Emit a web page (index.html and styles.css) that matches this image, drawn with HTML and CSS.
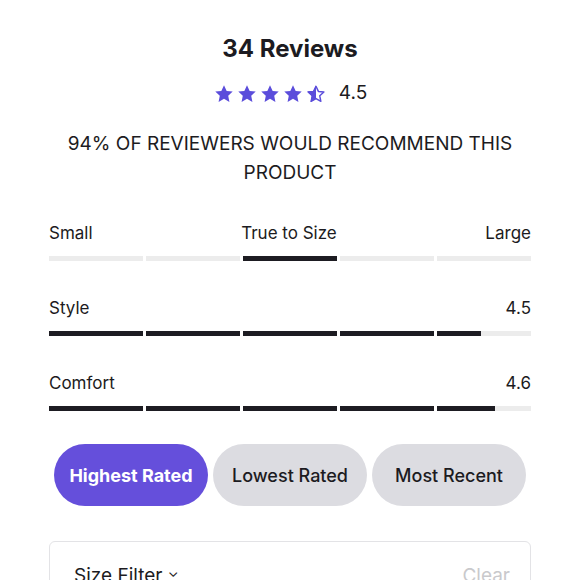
FILE: index.html
```html
<!DOCTYPE html>
<html lang="en">
  <head>
    <meta charset="UTF-8" />
    <meta name="viewport" content="width=device-width, initial-scale=1.0" />
    <title>Reviews</title>
    <link rel="stylesheet" href="styles.css">
  </head>
  <body>
    <div class="reviews">
      <h2 class="reviews-title">34 Reviews</h2>

      <div class="rating">
        <div class="stars">
          <svg viewBox="0 0 24 24"><path class="full" d="M12 2.5l2.9 6.2 6.6.7-4.9 4.6 1.3 6.6L12 17.3l-5.9 3.3 1.3-6.6-4.9-4.6 6.6-.7z"/></svg>
          <svg viewBox="0 0 24 24"><path class="full" d="M12 2.5l2.9 6.2 6.6.7-4.9 4.6 1.3 6.6L12 17.3l-5.9 3.3 1.3-6.6-4.9-4.6 6.6-.7z"/></svg>
          <svg viewBox="0 0 24 24"><path class="full" d="M12 2.5l2.9 6.2 6.6.7-4.9 4.6 1.3 6.6L12 17.3l-5.9 3.3 1.3-6.6-4.9-4.6 6.6-.7z"/></svg>
          <svg viewBox="0 0 24 24"><path class="full" d="M12 2.5l2.9 6.2 6.6.7-4.9 4.6 1.3 6.6L12 17.3l-5.9 3.3 1.3-6.6-4.9-4.6 6.6-.7z"/></svg>
          <svg viewBox="0 0 24 24">
            <path class="outline" d="M12 3.6l2.6 5.6 6 .6-4.5 4.2 1.2 6L12 17l-5.3 3 1.2-6-4.5-4.2 6-.6z"/>
            <path class="full" d="M12 2.5v14.8l-5.9 3.3 1.3-6.6-4.9-4.6 6.6-.7z"/>
          </svg>
        </div>
        <span class="rating-value">4.5</span>
      </div>

      <p class="recommend">94% of reviewers would recommend this product</p>

      <div class="metric">
        <div class="metric-labels">
          <span>Small</span>
          <span>True to Size</span>
          <span>Large</span>
        </div>
        <div class="bar">
          <div class="seg"></div>
          <div class="seg"></div>
          <div class="seg"><div class="fill" style="width: 100%"></div></div>
          <div class="seg"></div>
          <div class="seg"></div>
        </div>
      </div>

      <div class="metric">
        <div class="metric-labels">
          <span>Style</span>
          <span>4.5</span>
        </div>
        <div class="bar">
          <div class="seg"><div class="fill" style="width: 100%"></div></div>
          <div class="seg"><div class="fill" style="width: 100%"></div></div>
          <div class="seg"><div class="fill" style="width: 100%"></div></div>
          <div class="seg"><div class="fill" style="width: 100%"></div></div>
          <div class="seg"><div class="fill" style="width: 47%"></div></div>
        </div>
      </div>

      <div class="metric">
        <div class="metric-labels">
          <span>Comfort</span>
          <span>4.6</span>
        </div>
        <div class="bar">
          <div class="seg"><div class="fill" style="width: 100%"></div></div>
          <div class="seg"><div class="fill" style="width: 100%"></div></div>
          <div class="seg"><div class="fill" style="width: 100%"></div></div>
          <div class="seg"><div class="fill" style="width: 100%"></div></div>
          <div class="seg"><div class="fill" style="width: 62%"></div></div>
        </div>
      </div>

      <div class="sort-buttons">
        <button class="sort-btn active">Highest Rated</button>
        <button class="sort-btn">Lowest Rated</button>
        <button class="sort-btn">Most Recent</button>
      </div>

      <div class="filter-box">
        <span class="filter-title">Size Filter <span class="chevron">&#8964;</span></span>
        <span class="filter-clear">Clear</span>
      </div>
    </div>
  </body>
</html>
```

FILE: styles.css
```css
* {
  margin: 0;
  padding: 0;
  box-sizing: border-box;
}

body {
  font-family: "Inter", "Liberation Sans", sans-serif;
  background: #fff;
  color: #1c1b21;
  overflow: hidden;
}

.reviews {
  padding: 34px 48px 0 49px;
}

.reviews-title {
  text-align: center;
  font-size: 24px;
  font-weight: 700;
  line-height: 30px;
}

.rating {
  display: flex;
  justify-content: center;
  align-items: center;
  gap: 12px;
  margin-top: 16px;
}

.stars {
  display: flex;
  gap: 1px;
  margin-top: 3px;
}

.stars svg {
  width: 22px;
  height: 22px;
}

.stars .full {
  fill: #5b4ddb;
}

.stars .outline {
  fill: none;
  stroke: #5b4ddb;
  stroke-width: 1.6;
  stroke-linejoin: round;
}

.rating-value {
  font-size: 19px;
  line-height: 24px;
}

.recommend {
  text-align: center;
  text-transform: uppercase;
  font-size: 19px;
  line-height: 29px;
  margin: 24px 12px 0;
}

.metric {
  margin-top: 35px;
}

.metric + .metric {
  margin-top: 36px;
}

.metric-labels {
  display: flex;
  justify-content: space-between;
  font-size: 17px;
  line-height: 22px;
}

.bar {
  display: flex;
  gap: 3px;
  margin-top: 12px;
}

.seg {
  flex: 1;
  height: 5px;
  background: #ececec;
}

.fill {
  height: 100%;
  background: #1d1c22;
}

.sort-buttons {
  display: flex;
  justify-content: center;
  gap: 5px;
  margin-top: 33px;
}

.sort-btn {
  width: 154px;
  height: 62px;
  border: none;
  border-radius: 31px;
  background: #dcdce1;
  color: #1c1b21;
  font-family: inherit;
  font-size: 18px;
  font-weight: 500;
}

.sort-btn.active {
  background: #654fdb;
  color: #fff;
  font-weight: 700;
}

.filter-box {
  display: flex;
  justify-content: space-between;
  margin-top: 35px;
  padding: 22px 20px 0 24px;
  height: 80px;
  border: 1px solid #e3e3e6;
  border-radius: 6px;
  font-size: 19px;
}

.chevron {
  font-size: 14px;
  position: relative;
  top: -5px;
}

.filter-clear {
  color: #c9c9cc;
}
```
